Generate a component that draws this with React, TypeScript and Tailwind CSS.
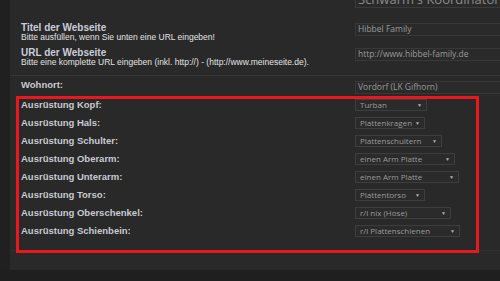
import React from "react";

const rows: { label: string; value: string; w: number }[] = [
  { label: "Ausrüstung Kopf:", value: "Turban", w: 72 },
  { label: "Ausrüstung Hals:", value: "Plattenkragen", w: 70 },
  { label: "Ausrüstung Schulter:", value: "Plattenschultern", w: 87 },
  { label: "Ausrüstung Oberarm:", value: "einen Arm Platte", w: 100 },
  { label: "Ausrüstung Unterarm:", value: "einen Arm Platte", w: 104 },
  { label: "Ausrüstung Torso:", value: "Plattentorso", w: 70 },
  { label: "Ausrüstung Oberschenkel:", value: "r/l nix (Hose)", w: 96 },
  { label: "Ausrüstung Schienbein:", value: "r/l Plattenschienen", w: 105 },
];

const labelFont = { fontFamily: '"Liberation Sans", Arial, sans-serif' };
const inputFont = { fontFamily: '"Open Sans", "Liberation Sans", sans-serif' };

function Select({ value, w }: { value: string; w: number }) {
  return (
    <div
      className="h-[12px] shrink-0 border border-[#3d3d3d] bg-[#2b2b2b] flex items-center justify-between pl-[4px] pr-[4px] text-[8px] leading-none text-[#9a9a9a]"
      style={{ ...inputFont, width: w }}
    >
      <span className="whitespace-nowrap">{value}</span>
      <span className="text-[5px] text-[#b0b0b0]">▼</span>
    </div>
  );
}

function Input({ value }: { value: string }) {
  return (
    <div
      className="h-[13px] w-[160px] shrink-0 border border-[#383838] bg-[#2a2a2a] flex items-center pl-[2px] text-[8.5px] leading-none text-[#9a9a9a] whitespace-nowrap"
      style={inputFont}
    >
      {value}
    </div>
  );
}

export default function App() {
  return (
    <div className="relative w-[500px] h-[281px] overflow-hidden bg-[#1f1f1f] flex">
      <div className="w-[10px] shrink-0 h-[270px] bg-[#202020]" />
      <div className="flex-1 min-w-0 overflow-hidden h-[270px] bg-[#292929] flex flex-col">
        {/* top clipped input */}
        <div className="h-[8px] shrink-0 flex items-end pl-[345px] overflow-hidden">
          <div
            className="h-[20px] w-[170px] shrink-0 border border-[#3a3a3a] bg-[#2a2a2a] flex items-end pl-[2px] pb-[1px] text-[13px] leading-none text-[#8a8a8a] whitespace-nowrap overflow-hidden"
            style={inputFont}
          >
            Schwarm's Koordinator d
          </div>
        </div>

        {/* Titel row */}
        <div className="flex items-start mt-[14px] pl-[11px]">
          <div className="w-[334px] shrink-0 flex flex-col">
            <div className="text-[10px] leading-[11px] font-bold text-[#c9cddb]" style={labelFont}>
              Titel der Webseite
            </div>
            <div className="text-[8.5px] leading-[8px] text-[#e2e2e2]" style={labelFont}>
              Bitte ausfüllen, wenn Sie unten eine URL eingeben!
            </div>
          </div>
          <div className="mt-[1px]">
            <Input value="Hibbel Family" />
          </div>
        </div>

        {/* URL row */}
        <div className="flex items-start mt-[6px] pl-[11px]">
          <div className="w-[334px] shrink-0 flex flex-col">
            <div className="text-[10px] leading-[11px] font-bold text-[#c9cddb]" style={labelFont}>
              URL der Webseite
            </div>
            <div className="text-[8.5px] leading-[8px] text-[#e2e2e2] whitespace-nowrap" style={labelFont}>
              Bitte eine komplette URL eingeben (inkl. http://) - (http://www.meineseite.de).
            </div>
          </div>
          <div className="mt-[1px]">
            <Input value="http://www.hibbel-family.de" />
          </div>
        </div>

        <div className="mt-[9px] h-px shrink-0 bg-[#343434]" />

        {/* Wohnort */}
        <div className="flex items-start h-[20px] shrink-0 pl-[11px]">
          <div
            className="w-[334px] shrink-0 mt-[4px] text-[9.5px] leading-[10px] font-bold text-[#c8cad0]"
            style={labelFont}
          >
            Wohnort:
          </div>
          <div className="mt-[5px]">
            <Input value="Vordorf (LK Gifhorn)" />
          </div>
        </div>

        {/* equipment rows */}
        <div className="flex flex-col">
          {rows.map((r) => (
            <div key={r.label} className="flex items-center h-[18px] shrink-0 pl-[11px]">
              <div
                className="w-[334px] shrink-0 text-[9.5px] leading-none font-bold text-[#c8cad0] whitespace-nowrap"
                style={labelFont}
              >
                {r.label}
              </div>
              <Select value={r.value} w={r.w} />
            </div>
          ))}
        </div>

        <div className="mt-[10px] h-px shrink-0 bg-[#303030]" />
      </div>

      {/* red annotation box */}
      <div className="absolute left-[16px] top-[96px] w-[463px] h-[157px] border-[3px] border-[#e8181d] pointer-events-none" />
    </div>
  );
}
